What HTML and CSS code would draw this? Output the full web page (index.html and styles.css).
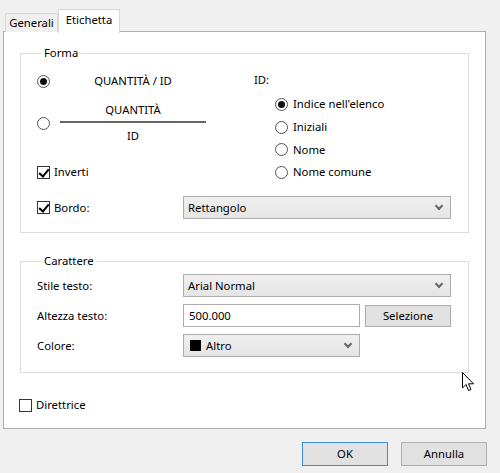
FILE: index.html
```html
<!DOCTYPE html>
<html lang="it">
<head>
<meta charset="utf-8">
<title>Etichetta</title>
<link rel="stylesheet" href="styles.css">
</head>
<body>
<div class="dialog">
  <div class="tabs">
    <div class="tab">Generali</div>
    <div class="tab active">Etichetta</div>
  </div>
  <div class="panel">
    <fieldset class="group forma">
      <legend>Forma</legend>
      <div class="forma-top">
        <div class="left-col">
          <div class="opt opt1">
            <span class="radio checked"></span>
            <span class="opt-text">QUANTITÀ / ID</span>
          </div>
          <div class="opt opt2">
            <span class="radio"></span>
            <span class="fraction">
              <span class="num">QUANTITÀ</span>
              <span class="rule"></span>
              <span class="den">ID</span>
            </span>
          </div>
          <div class="check-row inverti">
            <span class="check checked"></span>
            <span>Inverti</span>
          </div>
        </div>
        <div class="right-col">
          <div class="id-label">ID:</div>
          <div class="radio-list">
            <div class="radio-row"><span class="radio checked"></span><span>Indice nell'elenco</span></div>
            <div class="radio-row"><span class="radio"></span><span>Iniziali</span></div>
            <div class="radio-row"><span class="radio"></span><span>Nome</span></div>
            <div class="radio-row"><span class="radio"></span><span>Nome comune</span></div>
          </div>
        </div>
      </div>
      <div class="field-row bordo">
        <div class="check-row label-col">
          <span class="check checked"></span>
          <span>Bordo:</span>
        </div>
        <div class="select wide"><span>Rettangolo</span><span class="chev"></span></div>
      </div>
    </fieldset>

    <fieldset class="group carattere">
      <legend>Carattere</legend>
      <div class="field-row stile">
        <div class="label-col">Stile testo:</div>
        <div class="select wide"><span>Arial Normal</span><span class="chev"></span></div>
      </div>
      <div class="field-row altezza">
        <div class="label-col">Altezza testo:</div>
        <div class="input">500.000</div>
        <div class="btn sel-btn">Selezione</div>
      </div>
      <div class="field-row colore">
        <div class="label-col">Colore:</div>
        <div class="select narrow"><span class="swatch-wrap"><span class="swatch"></span><span>Altro</span></span><span class="chev"></span></div>
      </div>
    </fieldset>

    <div class="check-row direttrice">
      <span class="check"></span>
      <span>Direttrice</span>
    </div>
  </div>
  <div class="buttons">
    <div class="btn dlg-btn default">OK</div>
    <div class="btn dlg-btn">Annulla</div>
  </div>
  <svg class="cursor" width="13" height="20" viewBox="0 0 13 20">
    <path d="M0.5 0.5 L0.5 16 L4 12.5 L6.5 18.5 L9 17.5 L6.5 11.8 L11.5 11.8 Z" fill="#fff" stroke="#000" stroke-width="1" stroke-linejoin="miter"/>
  </svg>
</div>
</body>
</html>
```

FILE: styles.css
```css
* { box-sizing: border-box; }

html, body {
  margin: 0;
  padding: 0;
  background: #f0f0f0;
}

body {
  font-family: "Noto Sans", "Open Sans", sans-serif;
  font-size: 11.3px;
  color: #000;
}

.dialog {
  position: relative;
  width: 500px;
  height: 473px;
  overflow: hidden;
}

/* tabs */
.tabs {
  display: flex;
  align-items: flex-end;
  padding: 9px 0 0 5px;
  height: 32px;
}

.tab {
  height: 19px;
  width: 53px;
  border: 1px solid #d9d9d9;
  border-bottom: none;
  background: #f0f0f0;
  display: flex;
  align-items: center;
  justify-content: center;
  line-height: 16px;
  margin-bottom: 0;
}

.tab.active {
  width: 62px;
  height: 24px;
  background: #fff;
  border-color: #d9d9d9;
  margin-bottom: -1px;
  position: relative;
  z-index: 1;
  padding-bottom: 3px;
}

.panel {
  margin-left: 3px;
  width: 483px;
  height: 398px;
  margin-top: -1px;
  border: 1px solid #adadad;
  background: #fff;
  padding: 0 16px 0 16px;
}

/* group boxes */
.group {
  margin: 0;
  border: 1px solid #dcdcdc;
  width: 449px;
  min-width: 0;
  padding: 0 0 0 16px;
}

.group legend {
  padding: 0 3px;
  margin-left: 4px;
  line-height: 14px;
  height: 14px;
}

.forma {
  margin-top: 14px;
  padding-bottom: 13px;
}

.carattere {
  margin-top: 21px;
  padding-bottom: 15px;
}

.forma-top {
  display: flex;
  height: 136px;
}

.left-col {
  width: 217px;
  display: flex;
  flex-direction: column;
}

.opt {
  display: flex;
  align-items: center;
  gap: 10px;
}

.opt1 {
  margin-top: 12px;
  height: 18px;
}

.opt-text {
  width: 146px;
  text-align: center;
  line-height: 16px;
}

.opt2 {
  margin-top: 12px;
  height: 42px;
}

.fraction {
  width: 146px;
  display: flex;
  flex-direction: column;
  align-items: center;
}

.fraction .num,
.fraction .den {
  line-height: 16px;
  height: 16px;
}

.fraction .rule {
  align-self: stretch;
  height: 2px;
  background: #666;
  margin: 3px 0 5px;
}

.inverti {
  margin-top: 20px;
  height: 16px;
}

.check-row {
  display: flex;
  align-items: center;
  gap: 4px;
  line-height: 16px;
}

.right-col {
  display: flex;
  flex-direction: column;
}

.id-label {
  margin-top: 12px;
  line-height: 16px;
  height: 16px;
}

.radio-list {
  margin-top: 5px;
  padding-left: 21px;
  display: flex;
  flex-direction: column;
}

.radio-row {
  display: flex;
  align-items: center;
  gap: 5px;
  height: 22.7px;
  line-height: 16px;
}

/* controls */
.radio {
  flex: none;
  width: 13px;
  height: 13px;
  border: 1px solid #555;
  border-radius: 50%;
  background: #fff;
  display: flex;
  align-items: center;
  justify-content: center;
}

.radio.checked::after {
  content: "";
  width: 7px;
  height: 7px;
  border-radius: 50%;
  background: #111;
}

.check {
  flex: none;
  width: 13px;
  height: 13px;
  border: 1px solid #333;
  background: #fff;
  position: relative;
}

.check.checked::after {
  content: "";
  position: absolute;
  left: 3px;
  top: 0px;
  width: 4px;
  height: 8px;
  border-right: 2px solid #000;
  border-bottom: 2px solid #000;
  transform: rotate(40deg);
}

.field-row {
  display: flex;
  align-items: center;
}

.label-col {
  width: 146px;
  flex: none;
  line-height: 16px;
}

.bordo {
  height: 23px;
}

.select {
  height: 23px;
  border: 1px solid #adadad;
  background: linear-gradient(#efefef, #e5e5e5);
  display: flex;
  align-items: center;
  justify-content: space-between;
  padding: 0 6px 0 4px;
  line-height: 16px;
}

.select.wide { width: 268px; }
.select.narrow { width: 177px; }

.chev {
  width: 6px;
  height: 6px;
  border-right: 2px solid #666;
  border-bottom: 2px solid #666;
  transform: rotate(45deg);
  margin-top: -4px;
  margin-right: 2px;
}

.swatch-wrap {
  display: flex;
  align-items: center;
  gap: 5px;
}

.swatch {
  width: 11px;
  height: 11px;
  background: #000;
  margin-left: 2px;
}

.stile { margin-top: 6px; }

.altezza {
  margin-top: 7px;
  height: 23px;
}

.input {
  width: 177px;
  height: 23px;
  border: 1px solid #adadad;
  background: #fff;
  padding: 0 5px;
  line-height: 21px;
}

.btn {
  border: 1px solid #adadad;
  background: #e1e1e1;
  display: flex;
  align-items: center;
  justify-content: center;
  line-height: 16px;
}

.sel-btn {
  margin-left: 5px;
  width: 86px;
  height: 22px;
  margin-top: 1px;
}

.colore {
  margin-top: 7px;
  height: 23px;
}

.direttrice {
  margin-top: 25px;
  margin-left: -1px;
  height: 14px;
}

.buttons {
  display: flex;
  justify-content: flex-end;
  gap: 13px;
  padding: 13px 13px 0 0;
}

.dlg-btn {
  width: 86px;
  height: 24px;
}

.dlg-btn.default {
  border-color: #3c8ee0;
}

.cursor {
  position: absolute;
  left: 462px;
  top: 372px;
}
```
